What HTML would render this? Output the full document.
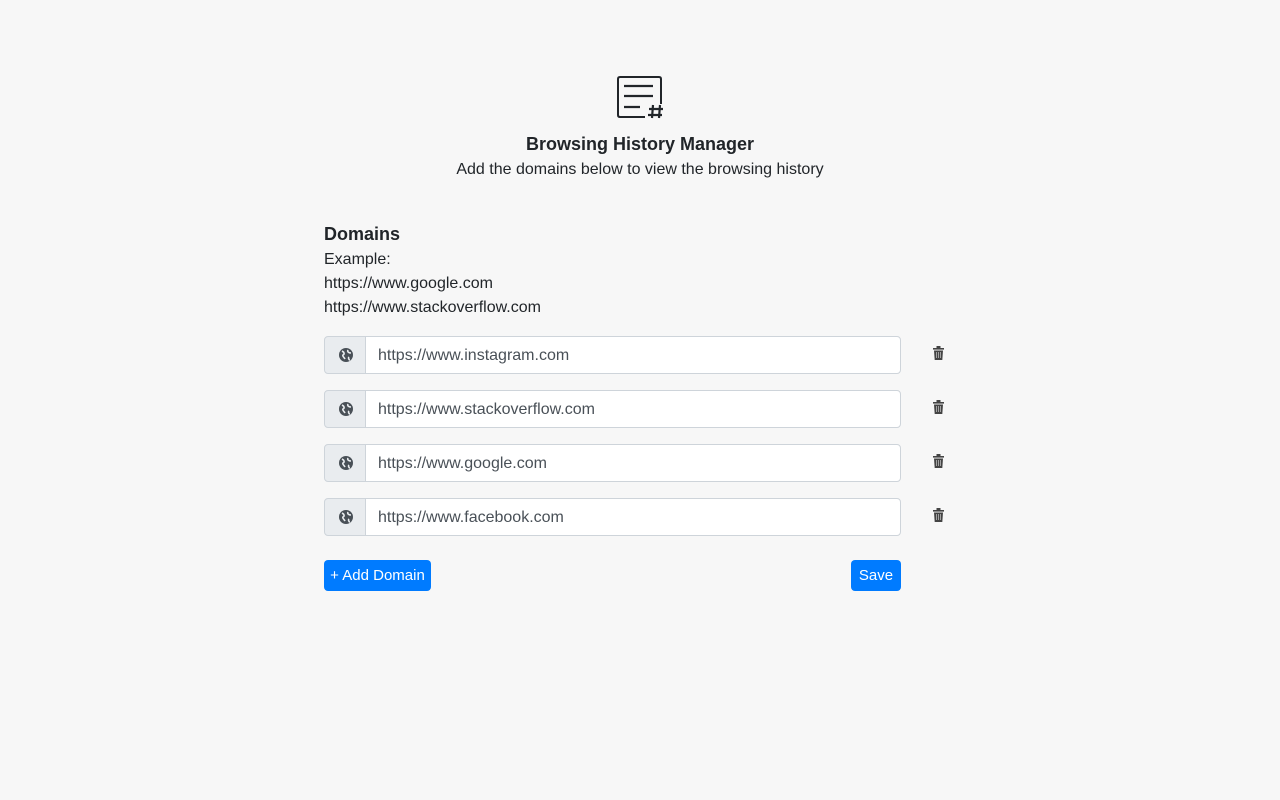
<!DOCTYPE html>
<html><head><style>
body{margin:0;background:#f7f7f7;font-family:"Liberation Sans",sans-serif;color:#212529;width:1280px;height:800px;position:relative;}
.abs{position:absolute}
.t1{left:0;width:1280px;text-align:center;top:134px;font-size:18px;font-weight:bold}
.t2{left:0;width:1280px;text-align:center;top:161px;font-size:16px}
.row{position:absolute;left:324px;width:577px;height:38px;}
.pre{position:absolute;left:0;top:0;width:41px;height:36px;background:#e9ecef;border:1px solid #ced4da;border-radius:4px 0 0 4px;}
.inp{position:absolute;left:41px;top:0;height:36px;background:#fff;border:1px solid #ced4da;border-radius:0 4px 4px 0;font-size:16px;color:#495057;line-height:38px;padding-left:12px;width:522px}
.glb{position:absolute;left:14px;top:11px}
.tr{position:absolute;left:609px;top:10px}
.btn{position:absolute;top:560px;height:31px;background:#007bff;color:#fff;border-radius:4px;font-size:15px;line-height:32px;text-align:center}
</style></head><body>
<svg class="abs" style="left:615px;top:74px" width="50" height="46" viewBox="0 0 50 46">
<path d="M30 43H5Q3 43 3 41V5Q3 3 5 3H44Q46 3 46 5V30" fill="none" stroke="#212529" stroke-width="2"/>
<path d="M9 12H38M9 22H38M9 33H25" stroke="#212529" stroke-width="2.2"/>
<path d="M38 31L37 44M45 31L44 44M34 35H48M33 41H47" stroke="#212529" stroke-width="2.2"/>
</svg>
<div class="abs t1">Browsing History Manager</div>
<div class="abs t2">Add the domains below to view the browsing history</div>
<div class="abs" style="left:324px;top:224px;font-size:18px;font-weight:bold">Domains</div>
<div class="abs" style="left:324px;top:248px;font-size:16px;line-height:24px">Example:<br>https://www.google.com<br>https://www.stackoverflow.com</div>

<div class="row" style="top:336px"><div class="pre"><svg class="glb" width="14" height="14" viewBox="0 0 14 14"><circle cx="7" cy="7" r="7" fill="#495057"/><path d="M3 3C5 4 6 6 4 7C3 8 5 9 6 11M9 2C8 4 10 5 12 5M10 9C9 10 10 12 11 12" stroke="#e9ecef" stroke-width="1.6" fill="none"/></svg></div><div class="inp">https://www.instagram.com</div><svg class="tr" width="11" height="14" viewBox="0 0 11 14"><rect x="0" y="2" width="11" height="1.6" fill="#444"/><rect x="3.5" y="0" width="4" height="2" fill="#444"/><path d="M1 4.5H10L9.3 14H1.7Z" fill="#444"/><path d="M3.5 6V12M5.5 6V12M7.5 6V12" stroke="#bbb" stroke-width="0.8"/></svg></div>
<div class="row" style="top:390px"><div class="pre"><svg class="glb" width="14" height="14" viewBox="0 0 14 14"><circle cx="7" cy="7" r="7" fill="#495057"/><path d="M3 3C5 4 6 6 4 7C3 8 5 9 6 11M9 2C8 4 10 5 12 5M10 9C9 10 10 12 11 12" stroke="#e9ecef" stroke-width="1.6" fill="none"/></svg></div><div class="inp">https://www.stackoverflow.com</div><svg class="tr" width="11" height="14" viewBox="0 0 11 14"><rect x="0" y="2" width="11" height="1.6" fill="#444"/><rect x="3.5" y="0" width="4" height="2" fill="#444"/><path d="M1 4.5H10L9.3 14H1.7Z" fill="#444"/><path d="M3.5 6V12M5.5 6V12M7.5 6V12" stroke="#bbb" stroke-width="0.8"/></svg></div>
<div class="row" style="top:444px"><div class="pre"><svg class="glb" width="14" height="14" viewBox="0 0 14 14"><circle cx="7" cy="7" r="7" fill="#495057"/><path d="M3 3C5 4 6 6 4 7C3 8 5 9 6 11M9 2C8 4 10 5 12 5M10 9C9 10 10 12 11 12" stroke="#e9ecef" stroke-width="1.6" fill="none"/></svg></div><div class="inp">https://www.google.com</div><svg class="tr" width="11" height="14" viewBox="0 0 11 14"><rect x="0" y="2" width="11" height="1.6" fill="#444"/><rect x="3.5" y="0" width="4" height="2" fill="#444"/><path d="M1 4.5H10L9.3 14H1.7Z" fill="#444"/><path d="M3.5 6V12M5.5 6V12M7.5 6V12" stroke="#bbb" stroke-width="0.8"/></svg></div>
<div class="row" style="top:498px"><div class="pre"><svg class="glb" width="14" height="14" viewBox="0 0 14 14"><circle cx="7" cy="7" r="7" fill="#495057"/><path d="M3 3C5 4 6 6 4 7C3 8 5 9 6 11M9 2C8 4 10 5 12 5M10 9C9 10 10 12 11 12" stroke="#e9ecef" stroke-width="1.6" fill="none"/></svg></div><div class="inp">https://www.facebook.com</div><svg class="tr" width="11" height="14" viewBox="0 0 11 14"><rect x="0" y="2" width="11" height="1.6" fill="#444"/><rect x="3.5" y="0" width="4" height="2" fill="#444"/><path d="M1 4.5H10L9.3 14H1.7Z" fill="#444"/><path d="M3.5 6V12M5.5 6V12M7.5 6V12" stroke="#bbb" stroke-width="0.8"/></svg></div>

<div class="btn" style="left:324px;width:107px">+ Add Domain</div>
<div class="btn" style="left:851px;width:50px">Save</div>
</body></html>
